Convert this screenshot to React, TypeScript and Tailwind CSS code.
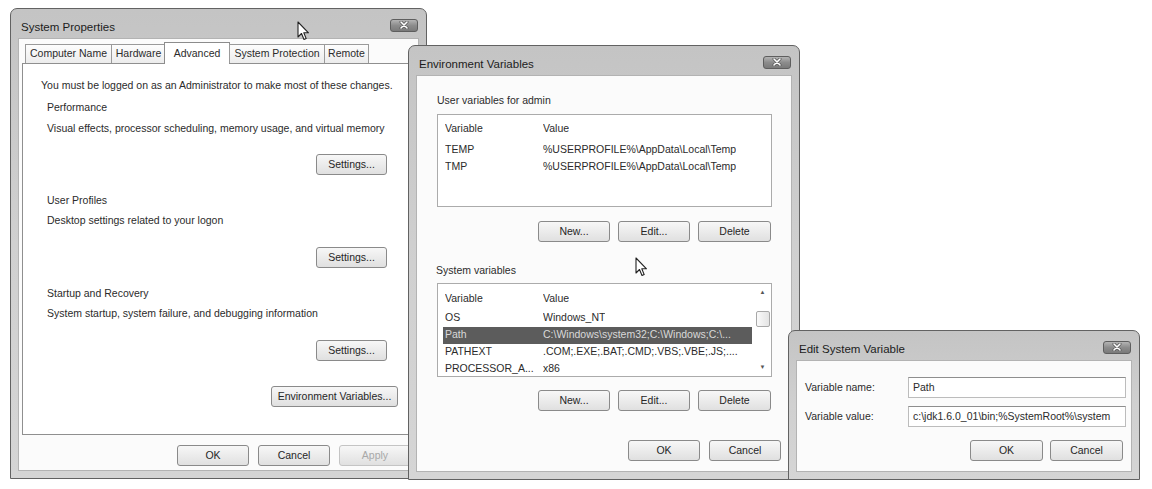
import type { ReactNode } from "react";
import clsx from "clsx";

function CloseButton() {
  return (
    <div className="flex h-[13px] w-[28px] items-center justify-center rounded-[3px] border border-[#5e5e5e] bg-linear-to-b from-[#b4b4b4] via-[#8c8c8c] to-[#7a7a7a]">
      <svg width="10" height="8" viewBox="0 0 10 8">
        <path d="M2 1 L8 7 M8 1 L2 7" stroke="#555" strokeWidth="3" strokeLinecap="round" />
        <path d="M2 1 L8 7 M8 1 L2 7" stroke="#fff" strokeWidth="1.6" strokeLinecap="round" />
      </svg>
    </div>
  );
}

function Win({
  title,
  className,
  children,
}: {
  title: string;
  className: string;
  children: ReactNode;
}) {
  return (
    <div
      className={clsx(
        "absolute flex flex-col rounded-t-[7px] border border-[#626262] bg-linear-to-b from-[#c4c4c4] via-[#d0d0d0] to-[#d5d5d5]",
        className
      )}
    >
      <div className="flex h-[29px] shrink-0 items-center justify-between pl-[10px] pr-[8px] pt-[3px]">
        <span className="mt-[6px] text-[11.5px] text-[#1c1c1c]">{title}</span>
        <CloseButton />
      </div>
      <div className="mx-[7px] mb-[7px] flex flex-1 flex-col border border-[#b3b3b3] bg-[#fbfbfb]">
        {children}
      </div>
    </div>
  );
}

function Btn({
  children,
  w = "w-[72px]",
  disabled,
}: {
  children: ReactNode;
  w?: string;
  disabled?: boolean;
}) {
  return (
    <div
      className={clsx(
        "flex h-[21px] shrink-0 items-center justify-center rounded-[3px] border bg-linear-to-b from-[#f7f7f7] to-[#e0e0e0]",
        w,
        disabled
          ? "border-[#c4c4c4] text-[#a8a8a8]"
          : "border-[#8a8a8a] text-[#262626]"
      )}
    >
      {children}
    </div>
  );
}

function Cursor() {
  return (
    <svg width="13" height="20" viewBox="0 0 13 20">
      <path
        d="M1 1 L1 16 L4.5 12.5 L7 18.5 L9.2 17.6 L6.8 11.8 L11.5 11.8 Z"
        fill="#fff"
        stroke="#222"
        strokeWidth="1.1"
        strokeLinejoin="round"
      />
    </svg>
  );
}

const tabs = [
  { label: "Computer Name", w: "w-[87px]" },
  { label: "Hardware", w: "w-[55px]" },
  { label: "Advanced", w: "w-[66px]", active: true },
  { label: "System Protection", w: "w-[96px]" },
  { label: "Remote", w: "w-[45px]" },
];

function SystemProperties() {
  return (
    <Win title="System Properties" className="left-[10px] top-[8px] h-[471px] w-[417px]">
      <div className="relative z-10 ml-[6px] mt-[3px] flex h-[21px] items-end">
        {tabs.map((t) =>
          t.active ? (
            <div
              key={t.label}
              className={clsx(
                "-mx-[1px] -mb-px flex h-[22px] items-start justify-center border border-b-0 border-[#8c8c8c] bg-white pt-[3px]",
                t.w
              )}
            >
              {t.label}
            </div>
          ) : (
            <div
              key={t.label}
              className={clsx(
                "-mr-px flex h-[19px] items-center justify-center border border-b-0 border-[#9a9a9a] bg-linear-to-b from-[#fdfdfd] to-[#ececec]",
                t.w
              )}
            >
              {t.label}
            </div>
          )
        )}
      </div>
      <div className="mx-[3px] flex h-[372px] flex-col border border-[#8f8f8f] bg-white">
        <p className="ml-[18px] mt-[14px] leading-[14px]">
          You must be logged on as an Administrator to make most of these changes.
        </p>
        <p className="ml-[24px] mt-[8px] leading-[14px]">Performance</p>
        <p className="ml-[24px] mt-[7px] leading-[14px]">
          Visual effects, processor scheduling, memory usage, and virtual memory
        </p>
        <div className="mr-[27px] mt-[19px] flex justify-end">
          <Btn w="w-[71px]">Settings...</Btn>
        </div>
        <p className="ml-[24px] mt-[18px] leading-[14px]">User Profiles</p>
        <p className="ml-[24px] mt-[6px] leading-[14px]">Desktop settings related to your logon</p>
        <div className="mr-[27px] mt-[20px] flex justify-end">
          <Btn w="w-[71px]">Settings...</Btn>
        </div>
        <p className="ml-[24px] mt-[18px] leading-[14px]">Startup and Recovery</p>
        <p className="ml-[24px] mt-[6px] leading-[14px]">
          System startup, system failure, and debugging information
        </p>
        <div className="mr-[27px] mt-[20px] flex justify-end">
          <Btn w="w-[71px]">Settings...</Btn>
        </div>
        <div className="mr-[16px] mt-[25px] flex justify-end">
          <Btn w="w-[127px]">Environment Variables...</Btn>
        </div>
      </div>
      <div className="mt-[10px] flex justify-end gap-[9px] pr-[7px]">
        <Btn>OK</Btn>
        <Btn>Cancel</Btn>
        <Btn disabled>Apply</Btn>
      </div>
    </Win>
  );
}

function VarRow({
  name,
  value,
  selected,
}: {
  name: string;
  value: string;
  selected?: boolean;
}) {
  return (
    <div
      className={clsx(
        "ml-[5px] flex h-[17px] w-[309px] items-center whitespace-nowrap pl-[2px]",
        selected ? "bg-[#5c5c5c] text-[#d9d9d9]" : "text-[#2b2b2b]"
      )}
    >
      <span className="w-[98px] shrink-0 overflow-hidden">{name}</span>
      <span className="overflow-hidden">{value}</span>
    </div>
  );
}

function EnvironmentVariables() {
  return (
    <Win title="Environment Variables" className="left-[408px] top-[45px] h-[435px] w-[392px]">
      <p className="ml-[20px] mt-[17px] leading-[14px]">User variables for admin</p>
      <div className="ml-[20px] mt-[7px] flex h-[93px] w-[335px] flex-col border border-[#ababab] bg-white pt-[5px]">
        <VarRow name="Variable" value="Value" />
        <div className="mt-[4px]">
          <VarRow name="TEMP" value="%USERPROFILE%\AppData\Local\Temp" />
          <VarRow name="TMP" value="%USERPROFILE%\AppData\Local\Temp" />
        </div>
      </div>
      <div className="mt-[14px] flex justify-end gap-[8px] pr-[20px]">
        <Btn>New...</Btn>
        <Btn>Edit...</Btn>
        <Btn w="w-[73px]">Delete</Btn>
      </div>
      <p className="ml-[19px] mt-[21px] leading-[14px]">System variables</p>
      <div className="ml-[20px] mt-[6px] flex h-[94px] w-[335px] border border-[#ababab] bg-white">
        <div className="flex flex-1 flex-col overflow-hidden pt-[7px]">
          <VarRow name="Variable" value="Value" />
          <div className="mt-[3px]">
            <VarRow name="OS" value="Windows_NT" />
            <VarRow selected name="Path" value="C:\Windows\system32;C:\Windows;C:\..." />
            <VarRow name="PATHEXT" value=".COM;.EXE;.BAT;.CMD;.VBS;.VBE;.JS;...." />
            <VarRow name="PROCESSOR_A..." value="x86" />
          </div>
        </div>
        <div className="flex w-[17px] flex-col items-center">
          <div className="flex h-[17px] items-center justify-center text-[6px] text-[#555]">▲</div>
          <div className="mt-[10px] h-[16px] w-[14px] rounded-[2px] border border-[#a8a8a8] bg-linear-to-r from-[#fafafa] to-[#e4e4e4]" />
          <div className="flex-1" />
          <div className="flex h-[17px] items-center justify-center text-[6px] text-[#555]">▼</div>
        </div>
      </div>
      <div className="mt-[13px] flex justify-end gap-[8px] pr-[20px]">
        <Btn>New...</Btn>
        <Btn>Edit...</Btn>
        <Btn w="w-[73px]">Delete</Btn>
      </div>
      <div className="mt-[29px] flex justify-end gap-[9px] pr-[10px]">
        <Btn>OK</Btn>
        <Btn>Cancel</Btn>
      </div>
    </Win>
  );
}

function EditSystemVariable() {
  return (
    <Win title="Edit System Variable" className="left-[788px] top-[330px] h-[150px] w-[352px]">
      <div className="mt-[16px] flex h-[21px] items-center pr-[5px]">
        <span className="w-[111px] shrink-0 pl-[8px]">Variable name:</span>
        <div className="flex h-full flex-1 items-center border border-[#bcbcbc] border-t-[#8e8e8e] bg-white pl-[4px]">
          Path
        </div>
      </div>
      <div className="mt-[8px] flex h-[21px] items-center pr-[5px]">
        <span className="w-[111px] shrink-0 pl-[8px]">Variable value:</span>
        <div className="flex h-full flex-1 items-center border border-[#bcbcbc] border-t-[#8e8e8e] bg-white pl-[4px]">
          c:\jdk1.6.0_01\bin;%SystemRoot%\system
        </div>
      </div>
      <div className="mt-[13px] flex justify-end gap-[7px] pr-[8px]">
        <Btn w="w-[73px]">OK</Btn>
        <Btn w="w-[73px]">Cancel</Btn>
      </div>
    </Win>
  );
}

export default function App() {
  return (
    <div className="relative h-[489px] w-[1152px] overflow-hidden bg-white font-['Liberation_Sans',Arial,sans-serif] text-[10.5px] text-[#2b2b2b]">
      <SystemProperties />
      <EnvironmentVariables />
      <EditSystemVariable />
      <div className="absolute left-[297px] top-[21px]">
        <Cursor />
      </div>
      <div className="absolute left-[635px] top-[257px]">
        <Cursor />
      </div>
    </div>
  );
}
